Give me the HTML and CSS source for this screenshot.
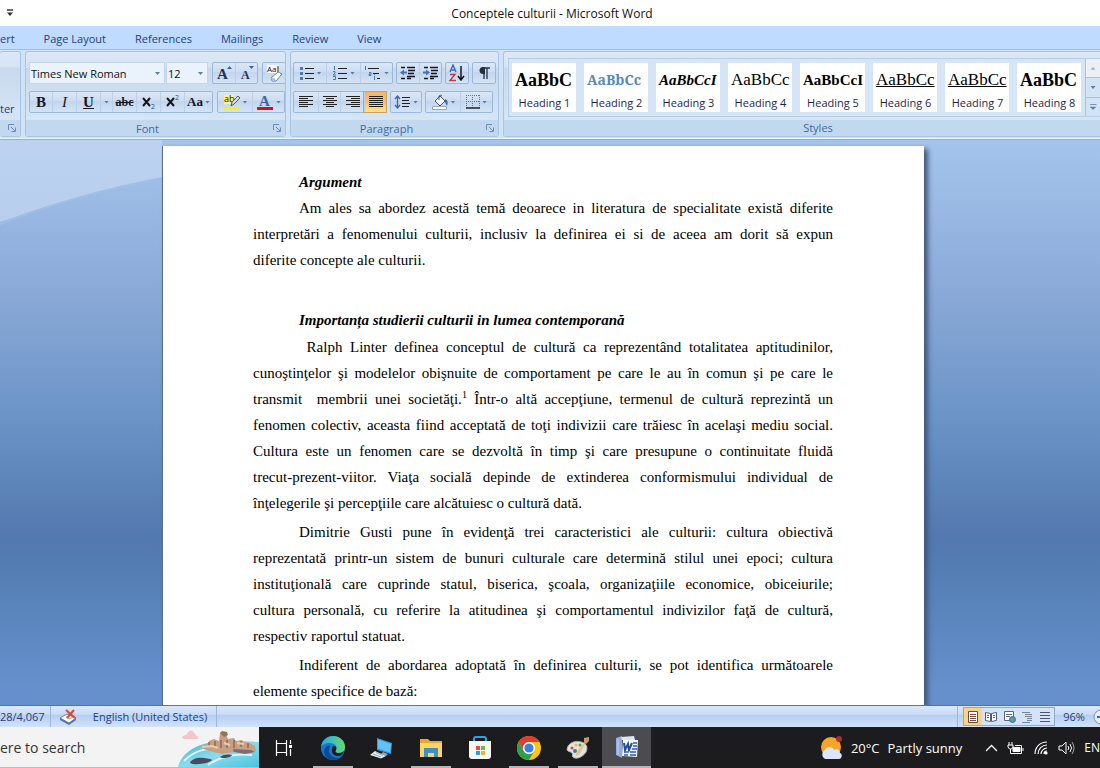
FILE: index.html
```html
<!DOCTYPE html>
<html lang="ro">
<head>
    <meta charset="UTF-8">
    <meta name="viewport" content="width=device-width, initial-scale=1.0">
    <title>Conceptele culturii - Microsoft Word</title>
    <link rel="stylesheet" href="styles.css">
</head>
<body>
    <header class="title-bar">
        <button class="quick-access" aria-label="Customize Quick Access Toolbar">
            <svg width="8" height="8" viewBox="0 0 8 8"><path d="M1 1h6" stroke="#2b2b45" stroke-width="1.4"/><path d="M1 3.5h6L4 7z" fill="#2b2b45"/></svg>
        </button>
        <h1 class="window-title">Conceptele culturii - Microsoft Word</h1>
    </header>

    <nav class="tabs">
        <a href="#">ert</a>
        <a href="#">Page Layout</a>
        <a href="#">References</a>
        <a href="#">Mailings</a>
        <a href="#">Review</a>
        <a href="#">View</a>
    </nav>

    <div class="ribbon">
        <section class="group clipboard-group">
            <div class="group-body"><button class="plain">ter</button></div>
            <div class="group-label">
                <button class="launcher" aria-label="Clipboard dialog"><svg width="8" height="8" viewBox="0 0 8 8" fill="none" stroke="#6d8db8"><path d="M.5 6V.5H6M3 3l4 4M7.5 3.500v4h-4"/></svg></button>
            </div>
        </section>

        <section class="group font-group">
            <div class="group-body">
                <div class="tool-row">
                    <div class="combos">
                        <select class="combo font-name" aria-label="Font"><option>Times New Roman</option></select>
                        <select class="combo font-size" aria-label="Font size"><option>12</option></select>
                    </div>
                    <div class="tools">
                        <button class="tool w22" aria-label="Grow font"><svg width="18" height="18" viewBox="0 0 18 18"><text x="2" y="15" class="g-serif" font-size="15">A</text><path d="M12 5h5l-2.500-3z" fill="#3f5f9a"/></svg></button>
                        <button class="tool w22" aria-label="Shrink font"><svg width="18" height="18" viewBox="0 0 18 18"><text x="3" y="15" class="g-serif" font-size="12">A</text><path d="M11 2h5l-2.500 3z" fill="#3f5f9a"/></svg></button>
                    </div>
                    <div class="tools">
                        <button class="tool w22" aria-label="Clear formatting"><svg width="20" height="18" viewBox="0 0 20 18"><path d="M3 1h12v8H3z" fill="#f7f9fd"/><text x="3" y="8" class="g-sans" font-size="8">Aa</text><path d="M14 2v6" stroke="#222"/><path d="M7 14l7-6 4 2-6 7H8z" fill="#fff" stroke="#7183a8"/><path d="M7 14l4 .5 1 2.500H8z" fill="#a9b8dc"/></svg></button>
                    </div>
                </div>
                <div class="tool-row">
                    <div class="tools">
                        <button class="tool w22" aria-label="Bold"><b class="glyph">B</b></button>
                        <button class="tool w24" aria-label="Italic"><i class="glyph light">I</i></button>
                        <button class="tool w24" aria-label="Underline"><u class="glyph">U</u></button>
                        <button class="tool w12" aria-label="Underline style"><span class="arrow"></span></button>
                        <button class="tool w24" aria-label="Strikethrough"><s class="glyph small">abc</s></button>
                        <button class="tool w24" aria-label="Subscript"><svg width="16" height="16" viewBox="0 0 16 16"><path d="M2 4l7 8M9 4l-7 8" stroke="#17171d" stroke-width="2"/><text x="10" y="15" font-size="7" fill="#2c4f8f">2</text></svg></button>
                        <button class="tool w24" aria-label="Superscript"><svg width="16" height="16" viewBox="0 0 16 16"><path d="M2 4l7 8M9 4l-7 8" stroke="#17171d" stroke-width="2"/><text x="10" y="6" font-size="7" fill="#2c4f8f">2</text></svg></button>
                        <button class="tool w28" aria-label="Change case"><b class="glyph case">Aa</b><span class="arrow"></span></button>
                    </div>
                    <div class="tools">
                        <button class="tool w34" aria-label="Highlight colour"><svg width="18" height="18" viewBox="0 0 18 18"><path d="M1 2h10v9H1z" fill="#fff67a"/><path d="M1 14h16v3H1z" fill="#fff200"/><text x="1" y="9" class="g-sans" font-size="9">ab</text><path d="M8 13l1-4 6-6 2 2-6 6z" fill="#d6dbe6" stroke="#555"/></svg><span class="arrow"></span></button>
                        <button class="tool w32" aria-label="Font colour"><svg width="18" height="18" viewBox="0 0 18 18"><text x="3" y="13" class="g-serif blue" font-size="15">A</text><path d="M1 14h16v3H1z" fill="#d4111b"/></svg><span class="arrow"></span></button>
                    </div>
                </div>
            </div>
            <div class="group-label">Font
                <button class="launcher" aria-label="Font dialog"><svg width="8" height="8" viewBox="0 0 8 8" fill="none" stroke="#6d8db8"><path d="M.5 6V.5H6M3 3l4 4M7.5 3.500v4h-4"/></svg></button>
            </div>
        </section>

        <section class="group paragraph-group">
            <div class="group-body">
                <div class="tool-row">
                    <div class="tools">
                        <button class="tool w32" aria-label="Bullets"><svg width="16" height="16" viewBox="0 0 16 16"><path d="M1 2h3v3H1zM1 7h3v3H1zM1 12h3v3H1z" fill="#4f76b5"/><path d="M6 3.500h9M6 8.500h9M6 13.500h9" stroke="#222"/></svg><span class="arrow"></span></button>
                        <button class="tool w34" aria-label="Numbering"><svg width="16" height="16" viewBox="0 0 16 16"><path d="M2.500 1v4M1 6.500h2v1.500l-2 2h3M1 11.500h2.500v3H1" stroke="#4f76b5" fill="none"/><path d="M6 3.500h9M6 8.500h9M6 13.500h9" stroke="#222"/></svg><span class="arrow"></span></button>
                        <button class="tool w32" aria-label="Multilevel list"><svg width="18" height="16" viewBox="0 0 18 16"><path d="M1.500 1v4M5 7.500h2v3H5v-1.500h2M10.500 11v4M10.500 9v1" stroke="#4f76b5" fill="none"/><path d="M4 3.500h11M9 8.500h6M13 13.500h3" stroke="#222"/></svg><span class="arrow"></span></button>
                    </div>
                    <div class="tools">
                        <button class="tool w22" aria-label="Decrease indent"><svg width="18" height="16" viewBox="0 0 18 16"><path d="M2 2.500h4M8 2.500h8M9 5.500h7M9 8.500h6M8 11.500h8M2 13.500h4M8 13.500h4" stroke="#16161d" stroke-width="1.500"/><path d="M1 7.500l4-3v2h3v2H5v2z" fill="#4770b6"/></svg></button>
                        <button class="tool w22" aria-label="Increase indent"><svg width="18" height="16" viewBox="0 0 18 16"><path d="M2 2.500h4M8 2.500h8M9 5.500h7M9 8.500h6M8 11.500h8M2 13.500h4M8 13.500h4" stroke="#16161d" stroke-width="1.500"/><path d="M8 7.500l-4-3v2H1v2h3v2z" fill="#4770b6"/></svg></button>
                    </div>
                    <div class="tools">
                        <button class="tool w22" aria-label="Sort"><svg width="18" height="18" viewBox="0 0 18 18"><path d="M2 8l3-7 3 7M3 6h4" stroke="#3f68b1" stroke-width="1.400" fill="none"/><path d="M2 10.500h5l-5 6h6" stroke="#b83d4a" stroke-width="1.400" fill="none"/><path d="M13 2v13M10 12l3 4 3-4" stroke="#17171d" stroke-width="1.500" fill="none"/></svg></button>
                    </div>
                    <div class="tools">
                        <button class="tool w22" aria-label="Show paragraph marks"><svg width="16" height="16" viewBox="0 0 16 16"><path d="M8 3v11M11 3v11M6 3h8" stroke="#25303f" stroke-width="1.300"/><path d="M9 2H7a3 3 0 0 0 0 7h2z" fill="#25303f"/></svg></button>
                    </div>
                </div>
                <div class="tool-row">
                    <div class="tools">
                        <button class="tool w24" aria-label="Align left"><svg width="14" height="14" viewBox="0 0 14 14" stroke="#222"><path d="M0 1.500h14M0 3.500h9M0 5.500h14M0 7.500h9M0 9.500h14M0 11.500h9"/></svg></button>
                        <button class="tool w22" aria-label="Center"><svg width="14" height="14" viewBox="0 0 14 14" stroke="#222"><path d="M0 1.500h14M3 3.500h8M0 5.500h14M3 7.500h8M0 9.500h14M3 11.500h8"/></svg></button>
                        <button class="tool w24" aria-label="Align right"><svg width="14" height="14" viewBox="0 0 14 14" stroke="#222"><path d="M0 1.500h14M5 3.500h9M0 5.500h14M5 7.500h9M0 9.500h14M5 11.500h9"/></svg></button>
                        <button class="tool w22 active" aria-label="Justify"><svg width="14" height="14" viewBox="0 0 14 14" stroke="#222"><path d="M0 1.500h14M0 3.500h14M0 5.500h14M0 7.500h14M0 9.500h14M0 11.500h14"/></svg></button>
                    </div>
                    <div class="tools">
                        <button class="tool w30" aria-label="Line spacing"><svg width="17" height="16" viewBox="0 0 17 16"><path d="M3.500 2v12M1 5l2.500-3L6 5M1 11l2.500 3L6 11" stroke="#41659f" stroke-width="1.300" fill="none"/><path d="M8 3.500h8M8 6.500h7M8 9.500h8M8 12.500h7" stroke="#222" stroke-width="1.200"/></svg><span class="arrow"></span></button>
                    </div>
                    <div class="tools">
                        <button class="tool w34" aria-label="Shading"><svg width="18" height="18" viewBox="0 0 18 18"><path d="M4 8l5-5 5 5-5 5z" fill="#f4f7fc" stroke="#46546e"/><path d="M8 7V3a2 2 0 0 1 3 0" fill="none" stroke="#46546e"/><path d="M14 6c3 1 3 4 2 7l-2-4z" fill="#41659f"/><path d="M1.500 13.500h14v3h-14z" fill="#fff" stroke="#9aa5b8"/></svg><span class="arrow"></span></button>
                        <button class="tool w32" aria-label="Borders"><svg width="14" height="14" viewBox="0 0 14 14" fill="none"><path d="M0 .5h14M0 6.500h14M.5 0v13M6.500 0v13M13.500 0v13" stroke="#62748f" stroke-dasharray="1 1"/><path d="M0 13h14" stroke="#1c2431" stroke-width="1.500"/></svg><span class="arrow"></span></button>
                    </div>
                </div>
            </div>
            <div class="group-label">Paragraph
                <button class="launcher" aria-label="Paragraph dialog"><svg width="8" height="8" viewBox="0 0 8 8" fill="none" stroke="#6d8db8"><path d="M.5 6V.5H6M3 3l4 4M7.5 3.500v4h-4"/></svg></button>
            </div>
        </section>

        <section class="group styles-group">
            <div class="gallery">
                <div class="gallery-items">
                    <button class="style-card"><span class="sample s1">AaBbC</span><span>Heading 1</span></button>
                    <button class="style-card"><span class="sample s2">AaBbCc</span><span>Heading 2</span></button>
                    <button class="style-card"><span class="sample s3">AaBbCcI</span><span>Heading 3</span></button>
                    <button class="style-card"><span class="sample s4">AaBbCc</span><span>Heading 4</span></button>
                    <button class="style-card"><span class="sample s5">AaBbCcI</span><span>Heading 5</span></button>
                    <button class="style-card"><span class="sample s4 lined">AaBbCc</span><span>Heading 6</span></button>
                    <button class="style-card"><span class="sample s4 lined">AaBbCc</span><span>Heading 7</span></button>
                    <button class="style-card"><span class="sample s1">AaBbC</span><span>Heading 8</span></button>
                </div>
                <div class="gallery-scroll">
                    <button class="off" aria-label="Previous styles"><span class="arrow up"></span></button>
                    <button aria-label="Next styles"><span class="arrow"></span></button>
                    <button aria-label="More styles"><span class="arrow more"></span></button>
                </div>
            </div>
            <div class="group-label">Styles</div>
        </section>
    </div>

    <main class="workspace">
        <article class="page">
            <h2>Argument</h2>
            <p>
                <span>Am ales sa abordez acestă temă deoarece in literatura de specialitate există diferite</span>
                <span>interpretări a fenomenului culturii, inclusiv la definirea ei si de aceea am dorit să expun</span>
                <span>diferite concepte ale culturii.</span>
            </p>
            <h2 class="spaced">Importanța studierii culturii in lumea contemporană</h2>
            <p>
                <span>&nbsp;Ralph Linter definea conceptul de cultură ca reprezentând totalitatea aptitudinilor,</span>
                <span>cunoştinţelor şi modelelor obişnuite de comportament pe care le au în comun şi pe care le</span>
                <span>transmit &nbsp;membrii unei societăţi.<sup>1</sup> Într-o altă accepţiune, termenul de cultură reprezintă un</span>
                <span>fenomen colectiv, aceasta fiind acceptată de toţi indivizii care trăiesc în acelaşi mediu social.</span>
                <span>Cultura este un fenomen care se dezvoltă în timp şi care presupune o continuitate fluidă</span>
                <span>trecut-prezent-viitor. Viaţa socială depinde de extinderea conformismului individual de</span>
                <span>înţelegerile şi percepţiile care alcătuiesc o cultură dată.</span>
            </p>
            <p>
                <span>Dimitrie Gusti pune în evidenţă trei caracteristici ale culturii: cultura obiectivă</span>
                <span>reprezentată printr-un sistem de bunuri culturale care determină stilul unei epoci; cultura</span>
                <span>instituţională care cuprinde statul, biserica, şcoala, organizaţiile economice, obiceiurile;</span>
                <span>cultura personală, cu referire la atitudinea şi comportamentul indivizilor faţă de cultură,</span>
                <span>respectiv raportul statuat.</span>
            </p>
            <p>
                <span>Indiferent de abordarea adoptată în definirea culturii, se pot identifica următoarele</span>
                <span>elemente specifice de bază:</span>
            </p>
        </article>
    </main>

    <div class="status-bar">
        <button class="status-item words">28/4,067</button>
        <button class="status-item proofing" aria-label="Proofing errors"><svg width="18" height="16" viewBox="0 0 18 16"><path d="M1 9l7-4 9 4-7 5z" fill="#fff" stroke="#6d7fa8"/><path d="M1 9v2l9 5 7-5V9l-7 5z" fill="#4c75b8"/><path d="M7 8l4 2 4-3" fill="none" stroke="#c79a4b"/><path d="M7 1l9 8M15 1L8 9" stroke="#e0443c" stroke-width="2"/></svg></button>
        <button class="status-item language">English (United States)</button>
        <div class="status-right">
            <div class="views">
                <button class="active" aria-label="Print layout"><svg width="12" height="12" viewBox="0 0 12 12"><path d="M1.500.5h9v11h-9z" fill="#fff" stroke="#6b4a38"/><path d="M3 3.500h6M3 5.500h6M3 7.500h6M3 9.500h6" stroke="#7c4a3b"/></svg></button>
                <button aria-label="Full screen reading"><svg width="12" height="12" viewBox="0 0 12 12" fill="#fff" stroke="#4f5d7a"><path d="M.5 1.500l5 1v8l-5-1zM11.500 1.500l-5 1v8l5-1z"/><path d="M2 4.500h2M2 6.500h2M8 4.500h2M8 6.500h2"/></svg></button>
                <button aria-label="Web layout"><svg width="13" height="12" viewBox="0 0 13 12"><path d="M1.500.5h9v9h-9z" fill="#fff" stroke="#59657f"/><path d="M3 3.500h6M3 5.500h4" stroke="#59657f"/><circle cx="9.500" cy="8.500" r="3" fill="#5b9f93" stroke="#3c68a0"/></svg></button>
                <button aria-label="Outline"><svg width="12" height="12" viewBox="0 0 12 12" stroke="#7183a0"><path d="M1 1.500h8M4 3.500h7M4 5.500h7M6 7.500h5M6 9.500h5M1 11.500h8"/></svg></button>
                <button aria-label="Draft"><svg width="12" height="12" viewBox="0 0 12 12" stroke="#4a5672"><path d="M1 1.500h10M1 4.500h10M1 7.500h10M1 10.500h10"/></svg></button>
            </div>
            <button class="zoom-level">96%</button>
            <button class="zoom-out" aria-label="Zoom out"><svg width="16" height="16" viewBox="0 0 16 16"><circle cx="8" cy="8" r="7" fill="#e4edfa" stroke="#7c90b3"/><path d="M4 8h8" stroke="#4a5f88" stroke-width="2"/></svg></button>
        </div>
    </div>

    <footer class="taskbar">
        <div class="search">
            <input type="text" placeholder="ere to search" aria-label="Search">
            <svg class="search-art" width="81" height="40" viewBox="0 0 81 40">
                <defs><linearGradient id="sea" x1="0" y1="0" x2="1" y2="1"><stop offset="0" stop-color="#3fa9cc"/><stop offset=".5" stop-color="#8bdcec"/><stop offset="1" stop-color="#4cc3dd"/></linearGradient></defs>
                <path d="M4 11c0-3 4-2 5-4 1-4 6-5 7-1 2 0 1 3 3 3 2 1 2 3-1 3H6z" fill="#f2c6cc"/>
                <path d="M0 40c2-10 12-20 30-24 15-3 35-2 51-1v25z" fill="url(#sea)"/>
                <path d="M6 34c10-10 20-13 34-12M30 38c12-8 24-12 44-10" stroke="#d9f6fa" stroke-width="2" fill="none"/>
                <path d="M22 20l8-3 1-3 5-2 5 2 1-8 5-1 3 7 6-1 2 3 6-1 2 2 6 1 5 3 1 5-8 2-14-1-12 2-16-4z" fill="#c99f82"/>
                <path d="M42 6l2-2 5 1 1 3-4 2z" fill="#97735f"/>
                <path d="M31 15v5M37 14v6M43 13v8M49 13v8M56 13v8M63 14v6M70 16v5" stroke="#8c6a5b" stroke-width="1.500"/>
                <path d="M24 20l10-1 6 2M46 16l6 2M59 16l7 1" stroke="#e8cdb3" stroke-width="2" fill="none"/>
                <path d="M55 22l18 1 4 2-10 2-11-2z" fill="#7a6e74"/>
                <path d="M12 36c1-4 8-6 14-5 5 1 8 1 8 2-2 3-17 6-22 3zM42 30c3-3 10-3 12-2-1 3-10 4-12 2z" fill="#454c61"/>
            </svg>
        </div>
        <nav class="apps">
            <button class="app" aria-label="Task View"><svg width="18" height="18" viewBox="0 0 18 18" fill="none" stroke="#fff" stroke-width="1.200"><path d="M1.500 1v3.500h10V1M1.500 4.500v9h10v-9M1.500 17v-3.500h10V17M15.500 1v4M15.500 10v7"/><path d="M14 6h3v3h-3z" fill="#fff" stroke="none"/></svg></button>
            <button class="app open" aria-label="Microsoft Edge"><svg width="26" height="26" viewBox="0 0 26 26">
                <defs><linearGradient id="e1" x1="0" x2="1"><stop offset="0" stop-color="#2aa6e8"/><stop offset="1" stop-color="#63da70"/></linearGradient></defs>
                <circle cx="13" cy="13" r="12" fill="#1478cf"/>
                <path d="M1 12C2 5 7 1 13 1c8 0 12 6 12 11 0 4-3 6-6 6-4 0-4-2-3-3 2-4-2-7-6-7-5 0-8 2-9 4z" fill="url(#e1)"/>
                <path d="M10 11c-3 6 1 12 8 12 3 0 4-1 5-3-2 3-6 5-10 5C7 25 4 20 4 17c0-4 3-7 6-6z" fill="#0f4a92"/>
                <path d="M16 15c-1 1-1 3 3 3 2 0 4-1 5-2-1 3-3 5-6 5-4 0-7-3-6-7 0-2 1-3 2-3 2 0 3 2 2 4z" fill="#1c1c1f"/>
            </svg></button>
            <button class="app" aria-label="This PC"><svg width="24" height="22" viewBox="0 0 24 22"><path d="M7 1l15 5-1 11L7 13z" fill="#2f9de6"/><path d="M8 2.500l13 4.500-1 8.500-12-4z" fill="#63c1f7"/><path d="M13 15l5 2-2 2-5-2z" fill="#8ea6b7"/><path d="M5 14l11 5-5 2.500L0 18z" fill="#e6ebef"/><path d="M3 17l8 3M6 15.500l7 3" stroke="#9aa9b5"/></svg></button>
            <button class="app open" aria-label="File Explorer"><svg width="22" height="20" viewBox="0 0 22 20"><path d="M0 1h8l2 2h12v16H0z" fill="#e8a92d"/><path d="M0 5h22v14H0z" fill="#fbd568"/><path d="M4 10h14v9h-4v-4H8v4H4z" fill="#3f8fc6"/></svg></button>
            <button class="app" aria-label="Microsoft Store"><svg width="24" height="24" viewBox="0 0 24 24"><path d="M6 6V3a2 2 0 0 1 2-2h8a2 2 0 0 1 2 2v3" fill="none" stroke="#32a3df" stroke-width="2"/><path d="M1 5h22v15a3 3 0 0 1-3 3H4a3 3 0 0 1-3-3z" fill="#f7f7f8"/><path d="M8 10h4v4H8z" fill="#e4532c"/><path d="M13 10h4v4h-4z" fill="#7db73b"/><path d="M8 15h4v4H8z" fill="#2e9fe0"/><path d="M13 15h4v4h-4z" fill="#f3b623"/></svg></button>
            <button class="app open" aria-label="Google Chrome"><svg width="24" height="24" viewBox="0 0 24 24"><circle cx="12" cy="12" r="12" fill="#fbc618"/><path d="M1.600 6A12 12 0 0 1 22.400 6H12a6 6 0 0 0-5.200 9z" fill="#e33b2e"/><path d="M1.600 6A12 12 0 0 0 12 24l5.200-9A6 6 0 0 1 6.800 15z" fill="#2da04e"/><circle cx="12" cy="12" r="6" fill="#fff"/><circle cx="12" cy="12" r="4.600" fill="#3c7fe6"/></svg></button>
            <button class="app open" aria-label="Paint"><svg width="24" height="24" viewBox="0 0 24 24"><path d="M1 13C2 7 9 4 15 6c6 1 7 6 5 10-3 5-10 8-13 5-2-1 1-3-1-4-2-2-5-1-5-4z" fill="#e3e4e2" stroke="#a9b3b8"/><path d="M19 8l-4 8c-2 4-5 4-6 4 2-2 1-4 3-6l6-7z" fill="#e4c38c"/><path d="M18 2l5-1v4l-3 3-2-1z" fill="#c99a62"/><circle cx="6" cy="12" r="1.500" fill="#db503e"/><circle cx="10" cy="9" r="1.500" fill="#f1b93a"/><circle cx="14" cy="9" r="1.500" fill="#55a661"/><circle cx="9" cy="15" r="2" fill="#357dbe"/></svg></button>
            <button class="app current" aria-label="Microsoft Word"><svg width="24" height="24" viewBox="0 0 24 24"><path d="M1 3l6-2v22l-6-3z" fill="#8fabdf"/><path d="M6 2l13-1 1 4H7z" fill="#dbe6f7"/><path d="M8 5h15l-1 17-15-1z" fill="#f2f6fc"/><path d="M3 4v16" stroke="#c7d7f2"/><path d="M9 8l1 7 3-6 1 6 3-7" fill="none" stroke="#234e9e" stroke-width="2"/><path d="M18 8h4M18 11h4M17 14h5M9 17h4M15 17h6M9 20h4M15 20h6" stroke="#2f5aa9" stroke-width="1.500"/></svg></button>
        </nav>
        <div class="tray">
            <button class="weather"><svg width="24" height="25" viewBox="0 0 24 25"><circle cx="12" cy="12" r="10" fill="#f7a526"/><circle cx="20" cy="4" r="3" fill="#a8322b"/><path d="M6 24a5 5 0 0 1 0-9c1-4 8-4 9 0 3-2 6 0 6 3 3 1 2 6-1 6z" fill="#dbe6f8"/></svg><span>20°C</span><span>Partly sunny</span></button>
            <button aria-label="Show hidden icons"><svg width="13" height="8" viewBox="0 0 13 8" fill="none" stroke="#fff" stroke-width="1.300"><path d="M1 7l5.500-5.500L12 7"/></svg></button>
            <button aria-label="Battery"><svg width="17" height="14" viewBox="0 0 17 14" fill="none" stroke="#fff"><path d="M2 1v3M5 1v3M1 4h5v2L4.500 8h-2L1 6zM3.500 8v4.500h11v-8H8"/><path d="M6 6.500h7v4H6z" fill="#fff"/><path d="M16 7v3"/></svg></button>
            <button aria-label="Network"><svg width="16" height="16" viewBox="0 0 16 16" fill="none" stroke="#fff" stroke-width="1.200"><path d="M2 14C2 7 7 2 14 2M5 14c0-5 4-9 9-9M8 14c0-3 3-6 6-6M11 14c0-2 1-3 3-3" /><circle cx="13" cy="13" r="1" fill="#fff"/></svg></button>
            <button aria-label="Volume"><svg width="17" height="14" viewBox="0 0 17 14" fill="none" stroke="#fff"><path d="M1 5h3l4-4v12L4 9H1zM10 5q1.500 2 0 4M12 3q3 4 0 8"/><path d="M14 1q4 6 0 12" stroke="#aaa"/></svg></button>
            <button>EN</button>
        </div>
    </footer>
</body>
</html>
```
FILE: styles.css
```css
:root {
    --ui-blue: #1f3f7d;
    --tool-border: #9bb8db;
    --group-border: #a9c4e2;
}

* {
    margin: 0;
    padding: 0;
    box-sizing: border-box;
}

body {
    height: 100vh;
    display: flex;
    flex-direction: column;
    overflow: hidden;
    background: #fff;
    color: #111;
    font-family: "Open Sans", "Noto Sans", sans-serif;
    font-size: 11px;
}

button {
    display: flex;
    align-items: center;
    justify-content: center;
    border: none;
    background: none;
    color: inherit;
    font: inherit;
    white-space: nowrap;
}

svg {
    display: block;
    flex-shrink: 0;
}

/* Title bar and tabs */
.title-bar {
    flex: 0 0 26px;
    display: flex;
    align-items: center;
}

.quick-access {
    width: 20px;
    height: 20px;
}

.window-title {
    flex: 1;
    padding-right: 16px;
    text-align: center;
    font-size: 12px;
    font-weight: 400;
}

.tabs {
    flex: 0 0 24px;
    display: flex;
    align-items: center;
    gap: 29px;
    padding-top: 2px;
    background: #bfdbff;
    border-bottom: 1px solid #9fc0e8;
}

.tabs a {
    color: var(--ui-blue);
    text-decoration: none;
}

/* Ribbon */
.ribbon {
    flex: 0 0 90px;
    display: flex;
    gap: 4px;
    padding: 1px 0 2px;
    background: #cfe2f6;
    border-bottom: 1px solid #8fb0d8;
    box-shadow: inset 0 -1px #e4f6ff;
}

.group {
    display: flex;
    flex-direction: column;
    border: 1px solid var(--group-border);
    border-radius: 3px;
    background: linear-gradient(#dde8f5 0%, #d5e3f3 18%, #c8d9ed 19%, #d9e9f9 100%);
    overflow: hidden;
}

.clipboard-group {
    flex: 0 0 21px;
    border-left: none;
}

.font-group {
    flex: 0 0 261px;
}

.paragraph-group {
    flex: 0 0 209px;
}

.styles-group {
    flex: 1;
    min-width: 0;
    border-right: none;
    border-radius: 3px 0 0 3px;
}

.group-body {
    flex: 1;
    display: flex;
    flex-direction: column;
    gap: 7px;
    padding: 10px 3px 0;
}

.clipboard-group .group-body {
    justify-content: flex-end;
    align-items: flex-start;
    padding: 0 0 4px;
    color: var(--ui-blue);
}

.group-label {
    flex: 0 0 16px;
    display: grid;
    grid-template-columns: 1fr 16px;
    align-items: center;
    text-align: center;
    background: #c1d8ef;
    color: #44699f;
}

.group-label .launcher {
    width: 16px;
    height: 14px;
}

.clipboard-group .group-label {
    display: flex;
    justify-content: flex-end;
}

.styles-group .group-label {
    display: block;
    padding-left: 32px;
}

.tool-row {
    display: flex;
    gap: 4px;
}

.paragraph-group .group-body {
    padding-left: 2px;
}

.paragraph-group .tool-row {
    gap: 3px;
}

.tools {
    display: flex;
    border: 1px solid var(--tool-border);
    border-radius: 2px;
    background: linear-gradient(#dbe7f6 0%, #ccdcf0 45%, #c2d5ec 46%, #d3e4f7 100%);
}

.tool {
    height: 20px;
    gap: 2px;
    border-left: 1px solid #bccfe8;
}

.tool:first-child {
    border-left: none;
}

.w12 { width: 12px; }
.w22 { width: 22px; }
.w24 { width: 24px; }
.w28 { width: 28px; }
.w30 { width: 30px; }
.w32 { width: 32px; }
.w34 { width: 34px; }

.tool.active {
    background: linear-gradient(#f5b56b, #fbc066 50%, #ffe38e);
    box-shadow: 0 0 0 1px #c9a26a;
}

.arrow {
    width: 5px;
    height: 3px;
    background: #5d7ba8;
    clip-path: polygon(0 0, 100% 0, 50% 100%);
}

.arrow.up {
    clip-path: polygon(0 100%, 100% 100%, 50% 0);
    background: #a9b2be;
}

.arrow.more {
    width: 7px;
    height: 6px;
    clip-path: polygon(0 0, 100% 0, 100% 1px, 0 1px, 0 3px, 100% 3px, 50% 100%, 0 3px);
}

.glyph {
    font-family: "Liberation Serif", serif;
    font-size: 15px;
    font-weight: 700;
    color: #17171d;
}

.glyph.light {
    font-weight: 400;
}

.glyph.small {
    font-size: 12px;
}

.glyph.case {
    font-size: 13px;
}

.g-serif {
    font-family: "Liberation Serif", serif;
    font-weight: 700;
    fill: #26324a;
}

.g-serif.blue {
    fill: #3c66ad;
}

.g-sans {
    font-family: "Open Sans", sans-serif;
    fill: #111;
}

.combos {
    display: flex;
    gap: 1px;
}

.combo {
    height: 22px;
    padding-left: 1px;
    border: 1px solid #c4d6ec;
    border-radius: 0;
    appearance: none;
    background: #eaf2fb url("data:image/svg+xml;charset=UTF-8,%3csvg xmlns='http://www.w3.org/2000/svg' width='5' height='3'%3e%3cpath d='M0 0h5L2.5 3z' fill='%235d7ba8'/%3e%3c/svg%3e") no-repeat right 4px center;
    color: #111;
    font: inherit;
}

.font-name {
    width: 136px;
}

.font-size {
    width: 42px;
}

/* Style gallery */
.gallery {
    flex: 1;
    display: flex;
    margin: 6px 0 3px 4px;
    border: 1px solid #b6cde8;
    border-right: none;
    background: #d6e5f5;
}

.gallery-items {
    flex: 1;
    min-width: 0;
    display: flex;
    gap: 8px;
    padding: 4px 4px 4px 3px;
    overflow: hidden;
}

.style-card {
    flex: 0 0 64px;
    flex-direction: column;
    justify-content: flex-end;
    padding: 0 2px 2px 3px;
    background: #fff;
    color: #1f1f4d;
}

.sample {
    width: 100%;
    height: 24px;
    margin-bottom: 3px;
    line-height: 24px;
    text-align: left;
    color: #000;
    font-family: "Liberation Serif", serif;
    font-size: 17px;
}

.s1 {
    font-size: 18px;
    font-weight: 700;
}

.s2 {
    font-family: "Noto Serif", "DejaVu Serif", serif;
    font-size: 14px;
    font-weight: 700;
    color: #5588b8;
}

.s3 {
    font-size: 15px;
    font-weight: 700;
    font-style: italic;
}

.s5 {
    font-size: 15px;
    font-weight: 700;
}

.sample.lined {
    text-decoration: underline;
}

.gallery-scroll {
    flex: 0 0 15px;
    display: flex;
    flex-direction: column;
    border-left: 1px solid #a9c4e2;
}

.gallery-scroll button {
    flex: 1;
    border-bottom: 1px solid #a9c4e2;
    background: #d3e3f6;
}

.gallery-scroll button:last-child {
    border-bottom: none;
}

.gallery-scroll .off {
    background: #eceff3;
}

/* Document */
.workspace {
    flex: 1;
    min-height: 0;
    display: flex;
    justify-content: center;
    padding: 6px 14px 0 0;
    overflow: hidden;
    background:
        url("data:image/svg+xml;charset=UTF-8,%3csvg xmlns='http://www.w3.org/2000/svg' width='700' height='90'%3e%3cpath d='M0 0H162V38Q80 54 0 82z' fill='%23c6d9f2' fill-opacity='.7'/%3e%3cpath d='M0 84Q70 56 162 38' fill='none' stroke='%239fbfe3' stroke-width='2'/%3e%3c/svg%3e") no-repeat 0 0,
        linear-gradient(#a5c4ec 0%, #8caad8 26%, #6f97c9 46%, #5379b0 70%, #527bb1 73%, #6690cc 97%);
}

.page {
    flex: 0 1 762px;
    padding: 23px 91px 0 90px;
    background: #fff;
    border-left: 1px solid #5a6c88;
    box-shadow: 4px 3px 5px #42587c;
    color: #000;
    font-family: "Liberation Serif", serif;
    font-size: 15px;
    line-height: 26px;
}

.page h2 {
    padding-left: 46px;
    font-size: 15px;
    font-style: italic;
}

.page h2.spaced {
    margin: 34px 0 1px;
}

.page p {
    margin-bottom: 3px;
    text-indent: 46px;
}

.page p span {
    display: block;
    text-align: justify;
    text-align-last: justify;
    text-indent: 0;
}

.page p span:first-child {
    text-indent: 46px;
}

.page p span:last-child {
    text-align-last: left;
}

.page sup {
    font-size: 10px;
    line-height: 1;
}

/* Status bar */
.status-bar {
    flex: 0 0 22px;
    display: flex;
    border-top: 1px solid #4f75aa;
    background: linear-gradient(#d9e8fb 0%, #c9dcf7 40%, #b4cdf0 42%, #d2e3fa 100%);
    color: var(--ui-blue);
}

.status-item.words {
    width: 51px;
    justify-content: flex-start;
    border-right: 1px solid #9db8dc;
}

.status-item.proofing {
    width: 33px;
}

.status-item.language {
    width: 133px;
    border-right: 1px solid #9db8dc;
}

.status-right {
    display: flex;
    align-items: center;
    margin-left: auto;
    padding-left: 5px;
    border-left: 1px solid #9db8dc;
}

.views {
    display: flex;
    border: 1px solid #8da9cf;
    background: #d4e3f6;
}

.views button {
    width: 18px;
    height: 17px;
}

.views .active {
    background: #fbd08a;
}

.zoom-level {
    width: 38px;
}

.zoom-out {
    width: 7px;
    justify-content: flex-start;
    overflow: hidden;
}

/* Windows taskbar */
.taskbar {
    flex: 0 0 40px;
    display: flex;
    background: #1c1b1d;
    color: #fff;
    font-size: 14px;
}

.search {
    flex: 0 0 259px;
    display: flex;
    background: #f3f3f3;
    border-bottom: 1px solid #bbb;
}

.search input {
    flex: 1;
    min-width: 0;
    border: none;
    outline: none;
    background: none;
    font: inherit;
}

.search input::placeholder {
    color: #333;
    opacity: 1;
}

.apps {
    display: flex;
}

.app {
    width: 49px;
}

.app.open {
    background: linear-gradient(#b5b5b8, #b5b5b8) no-repeat center bottom / 40px 2px;
}

.app.current {
    background: #4c4b4f;
    border-bottom: 2px solid #b5b5b8;
}

.tray {
    display: flex;
    align-items: center;
    gap: 9px;
    margin-left: auto;
    font-size: 12px;
}

.weather {
    gap: 8px;
    margin-right: 14px;
    font-size: 13px;
}
```
